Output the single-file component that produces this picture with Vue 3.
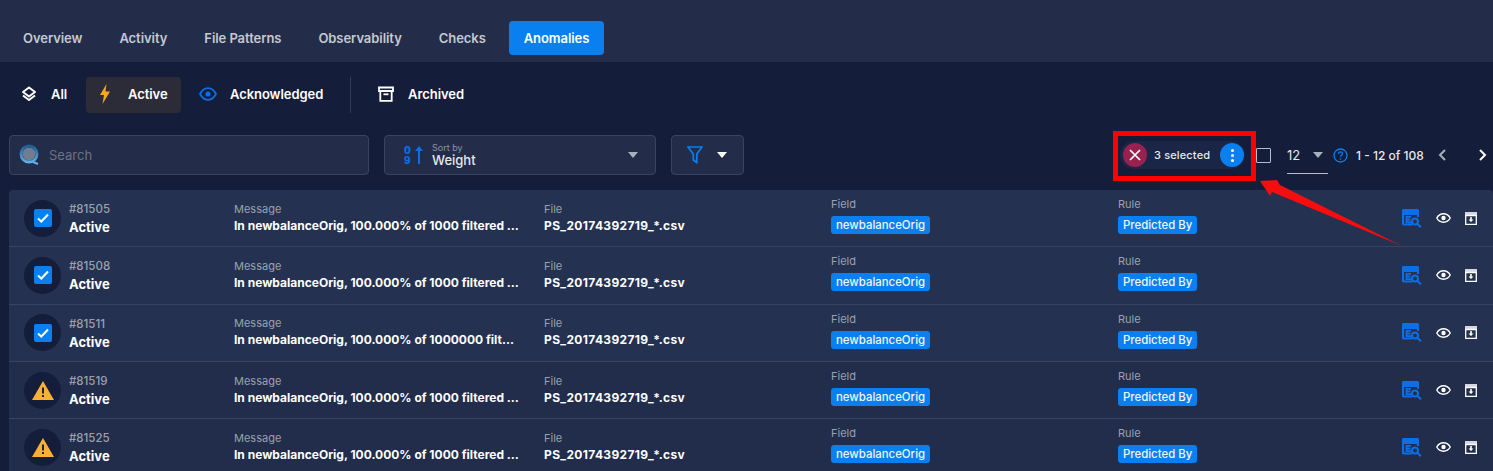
<template>
  <div class="page">
    <!-- tabs -->
    <nav class="tabs">
      <span v-for="tab in tabs" :key="tab" :class="['tab', { active: tab === 'Anomalies' }]">{{ tab }}</span>
    </nav>

    <!-- status filters -->
    <div class="status-row">
      <div class="status status-all">
        <svg width="18" height="18" viewBox="0 0 18 18" fill="none" stroke="#fff" stroke-width="2" stroke-linejoin="round"><path d="M9 2.500 15 7 9 11.500 3 7Z" /><path d="M3 10.500 9 15l6-4.500" /></svg>
        <span>All</span>
      </div>
      <div class="status status-active">
        <svg width="12" height="20" viewBox="0 0 12 20"><path d="M7.500 0 1 11h4l-1.500 9L11 7.500H6.500Z" fill="#f5a623" /></svg>
        <span>Active</span>
      </div>
      <div class="status status-ack">
        <svg width="18" height="14" viewBox="0 0 18 14" fill="none"><path d="M1 7c2-3.800 4.800-5.800 8-5.800s6 2 8 5.800c-2 3.800-4.800 5.800-8 5.800S3 10.800 1 7Z" stroke="#0a6fe8" stroke-width="1.800" /><circle cx="9" cy="7" r="2.600" fill="#0a6fe8" /></svg>
        <span>Acknowledged</span>
      </div>
      <div class="divider"></div>
      <div class="status status-arch">
        <svg width="16" height="16" viewBox="0 0 16 16" fill="none" stroke="#fff" stroke-width="1.800"><path d="M1 1.500h14v3.500H1Z" /><path d="M2.300 5v9.800h11.400V5" /><path d="M5.500 8.300h5" /></svg>
        <span>Archived</span>
      </div>
    </div>

    <!-- toolbar -->
    <div class="toolbar">
      <div class="box search">
        <svg width="22" height="24" viewBox="0 0 22 24" fill="none">
          <defs>
            <linearGradient id="ring" x1="0" y1="0" x2="0" y2="1">
              <stop offset="0" stop-color="#1c5f96" />
              <stop offset="1" stop-color="#5fb0e6" />
            </linearGradient>
          </defs>
          <circle cx="10" cy="11" r="6.500" fill="#717c90" />
          <circle cx="10" cy="11" r="8" stroke="url(#ring)" stroke-width="2.800" />
          <path d="M14 19l5 2" stroke="#5fb0e6" stroke-width="2.400" />
        </svg>
        <span>Search</span>
      </div>
      <div class="box sort">
        <div class="sort-icon">
          <div class="digits"><span>0</span><span>9</span></div>
          <svg width="8" height="18" viewBox="0 0 8 18"><path d="M4 0 8 5H5v13H3V5H0Z" fill="#0a6fe8" /></svg>
        </div>
        <div class="sort-text">
          <small>Sort by</small>
          <b>Weight</b>
        </div>
        <i class="caret grey"></i>
      </div>
      <div class="box filter">
        <svg width="16" height="18" viewBox="0 0 16 18" fill="none" stroke="#0a7ff0" stroke-width="1.700"><path d="M1 1h14L9.800 8v8.500L6.300 14V8Z" /></svg>
        <i class="caret"></i>
      </div>

      <div class="toolbar-right">
        <div class="selection">
          <span class="clear">
            <svg width="12" height="12" viewBox="0 0 12 12" stroke="#fff" stroke-width="1.700"><path d="M1 1l10 10M11 1 1 11" /></svg>
          </span>
          <span class="sel-text">3 selected</span>
          <span class="more"><em></em><em></em><em></em></span>
        </div>
        <span class="check-all"></span>
        <div class="per-page">
          <span>12</span>
          <i class="caret grey"></i>
        </div>
        <svg class="help" width="15" height="15" viewBox="0 0 15 15" fill="none"><circle cx="7.500" cy="7.500" r="6.500" stroke="#0a7ff0" stroke-width="1.300" /><path d="M5.500 5.800c0-1.200.9-2 2-2s2 .8 2 1.900c0 1.500-2 1.500-2 3" stroke="#0a7ff0" stroke-width="1.300" /><circle cx="7.500" cy="11" r=".8" fill="#0a7ff0" /></svg>
        <span class="range">1 - 12 of 108</span>
        <svg class="prev" width="9" height="12" viewBox="0 0 9 12" fill="none" stroke="#a9afbd" stroke-width="2"><path d="M7 1 2 6l5 5" /></svg>
        <svg class="next" width="9" height="12" viewBox="0 0 9 12" fill="none" stroke="#fff" stroke-width="2"><path d="M2 1l5 5-5 5" /></svg>
      </div>
    </div>

    <!-- anomaly rows -->
    <div class="list">
      <div v-for="row in rows" :key="row.id" :class="['row', { picked: row.checked }]">
        <div class="id-cell">
          <span class="badge">
            <svg v-if="row.checked" width="18" height="18" viewBox="0 0 18 18"><rect width="18" height="18" rx="2" fill="#0a7ff0" /><path d="M4 9.500l3.300 3L14 5.500" fill="none" stroke="#fff" stroke-width="2" /></svg>
            <svg v-else width="22" height="19" viewBox="0 0 22 19"><path d="M11 0 22 19H0Z" fill="#fbb034" /><path d="M10 6.500h2v6h-2ZM10 14h2v2h-2Z" fill="#1a2340" /></svg>
          </span>
          <div>
            <div class="num">#{{ row.id }}</div>
            <div class="state">Active</div>
          </div>
        </div>
        <div class="cell">
          <label>Message</label>
          <div class="val">{{ row.message }}</div>
        </div>
        <div class="cell">
          <label>File</label>
          <div class="val file">PS_20174392719_*.csv</div>
        </div>
        <div class="cell tagged">
          <label>Field</label>
          <span class="tag">newbalanceOrig</span>
        </div>
        <div class="cell tagged">
          <label>Rule</label>
          <span class="tag">Predicted By</span>
        </div>
        <div class="actions">
          <svg width="20" height="19" viewBox="0 0 20 19" fill="none">
            <path d="M10 15.500H2A1 1 0 0 1 1 14.500V2A1 1 0 0 1 2 1h13a1 1 0 0 1 1 1v6" stroke="#0a6fe8" stroke-width="2.200" />
            <path d="M1 1h15v5H1Z" fill="#0a6fe8" />
            <path d="M4.500 7.800h4.500M4.500 10.500h4M4.500 13.200h4.500M4.500 7V14" stroke="#0a6fe8" stroke-width="1.800" />
            <circle cx="13" cy="12.500" r="3" stroke="#0a6fe8" stroke-width="2" />
            <path d="M15.200 14.700 19 18.300" stroke="#0a6fe8" stroke-width="2" />
          </svg>
          <svg class="eye" width="15" height="10" viewBox="0 0 15 10" fill="none"><path d="M.8 5C2.300 2.200 4.600.8 7.500.8s5.200 1.400 6.700 4.200c-1.500 2.800-3.800 4.200-6.700 4.200S2.300 7.800.8 5Z" stroke="#fff" stroke-width="1.400" /><circle cx="7.500" cy="5" r="2.200" fill="#fff" /></svg>
          <svg class="box-icon" width="12" height="13" viewBox="0 0 12 13"><path d="M0 0h12v3H0Z" fill="#d5d7de" /><path d="M.7 3.500h10.600v9H.7Z" fill="none" stroke="#fff" stroke-width="1.300" /><path d="M5.200 5h1.600v2.500h1.700L6 10 3.500 7.500h1.700Z" fill="#fff" /></svg>
        </div>
      </div>
    </div>

    <!-- screenshot annotation -->
    <div class="mark-box"></div>
    <svg class="mark-arrow" width="150" height="70" viewBox="0 0 150 70"><path d="M0 1 17 0 20 5 142 66 12 12 10 16Z" fill="#f60d0d" /></svg>
  </div>
</template>

<script setup>
const tabs = ['Overview', 'Activity', 'File Patterns', 'Observability', 'Checks', 'Anomalies']

const shortMsg = 'In newbalanceOrig, 100.000% of 1000 filtered ...'
const rows = [
  { id: 81505, checked: true, message: shortMsg },
  { id: 81508, checked: true, message: shortMsg },
  { id: 81511, checked: true, message: 'In newbalanceOrig, 100.000% of 1000000 filt...' },
  { id: 81519, checked: false, message: shortMsg },
  { id: 81525, checked: false, message: shortMsg }
]
</script>

<style>
html, body {
  margin: 0;
  background: #141d3a;
  overflow: hidden;
}
</style>

<style scoped>
.page {
  position: relative;
  width: 1493px;
  height: 471px;
  overflow: hidden;
  background: #141d3a;
  color: #fff;
  font-family: "Inter", "Liberation Sans", sans-serif;
}

.tabs {
  display: flex;
  align-items: center;
  height: 62px;
  padding: 13px 0 0 8px;
  box-sizing: border-box;
  background: #232d4a;
}

.tab {
  display: flex;
  align-items: center;
  height: 34px;
  padding: 0 15px;
  margin-right: 7px;
  border-radius: 4px;
  font-size: 13px;
  font-weight: 600;
  letter-spacing: -0.06px;
  color: #c5c8d0;
}

.tab.active {
  margin: 0 0 0 1px;
  background: #0a7ff0;
  color: #fff;
}

.status-row {
  display: flex;
  align-items: center;
  height: 36px;
  margin-top: 15px;
  padding-left: 20px;
}

.status {
  display: flex;
  align-items: center;
  height: 36px;
  padding-bottom: 2px;
  box-sizing: border-box;
  font-size: 13px;
  font-weight: 600;
  letter-spacing: -0.06px;
}

.status-all {
  gap: 13px;
  width: 66px;
}

.status-active {
  gap: 17px;
  width: 95px;
  padding-left: 13px;
  background: #2b2c38;
  border-radius: 4px;
}

.status-ack {
  gap: 13px;
  width: 169px;
  padding-left: 18px;
}

.divider {
  width: 1px;
  height: 36px;
  background: #343d58;
}

.status-arch {
  gap: 14px;
  padding-left: 27px;
}

.toolbar {
  display: flex;
  align-items: center;
  height: 40px;
  margin-top: 22px;
  padding-left: 9px;
}

.box {
  display: flex;
  align-items: center;
  box-sizing: border-box;
  height: 40px;
  background: #232d4a;
  border: 1px solid #3a4461;
  border-radius: 4px;
}

.search {
  width: 360px;
  gap: 8px;
  padding-left: 9px;
  font-size: 13px;
  color: #6c7285;
}

.sort {
  width: 272px;
  margin-left: 15px;
  padding: 0 17px 0 19px;
}

.sort-icon {
  display: flex;
  align-items: center;
  gap: 4px;
  width: 28px;
}

.digits {
  display: flex;
  flex-direction: column;
  font-size: 10px;
  font-weight: 800;
  line-height: 10px;
  color: #0a6fe8;
}

.sort-text {
  flex: 1;
  display: flex;
  flex-direction: column;
}

.sort-text small {
  font-size: 9px;
  line-height: 10px;
  color: #8d93a4;
}

.sort-text b {
  font-size: 13px;
  font-weight: 500;
  line-height: 15px;
  color: #e6e8ed;
}

.caret {
  display: block;
  width: 0;
  height: 0;
  border-left: 5px solid transparent;
  border-right: 5px solid transparent;
  border-top: 6px solid #fff;
}

.caret.grey {
  border-top-color: #a9afbd;
}

.filter {
  width: 73px;
  margin-left: 15px;
  padding-left: 15px;
  gap: 14px;
}

.toolbar-right {
  display: flex;
  align-items: center;
  margin-left: 376px;
}

.selection {
  display: flex;
  align-items: center;
  width: 125px;
  height: 28px;
  padding: 0 1px 0 3px;
  box-sizing: border-box;
  border-radius: 14px;
  background: #1b2647;
}

.clear {
  display: flex;
  align-items: center;
  justify-content: center;
  width: 24px;
  height: 24px;
  border-radius: 50%;
  background: #97214f;
}

.sel-text {
  flex: 1;
  padding-left: 7px;
  font-size: 11px;
  font-weight: 500;
  letter-spacing: 0.15px;
  color: #e6e8ed;
}

.more {
  display: flex;
  flex-direction: column;
  align-items: center;
  justify-content: center;
  gap: 2px;
  width: 24px;
  height: 24px;
  border-radius: 50%;
  background: #0a7ff0;
}

.more em {
  width: 3px;
  height: 3px;
  border-radius: 50%;
  background: #fff;
}

.check-all {
  width: 13px;
  height: 13px;
  margin-left: 11px;
  border: 1px solid #b9bcc6;
  border-radius: 1px;
}

.per-page {
  display: flex;
  align-items: center;
  gap: 13px;
  box-sizing: border-box;
  width: 41px;
  height: 38px;
  margin: 0 5px 0 16px;
  border-bottom: 1px solid #b9bcc6;
  font-size: 13px;
  color: #e6e8ed;
}

.range {
  margin-left: 8px;
  font-size: 12px;
  font-weight: 500;
  color: #e6e8ed;
}

.prev {
  margin-left: 14px;
}

.next {
  margin-left: 31px;
}

.list {
  margin: 15px 0 0 9px;
  border-radius: 4px 4px 0 0;
  overflow: hidden;
}

.row {
  display: grid;
  grid-template-columns: 225px 310px 287px 287px 1fr 91px;
  align-items: center;
  box-sizing: border-box;
  height: 57.3px;
  border-bottom: 1px solid #3a4461;
  background: #222c4b;
}

.row.picked {
  background: #243150;
}

.id-cell {
  display: flex;
  align-items: center;
  gap: 8px;
  padding-left: 15px;
}

.badge {
  display: flex;
  align-items: center;
  justify-content: center;
  width: 37px;
  height: 37px;
  border-radius: 50%;
  background: #141d3a;
}

.num {
  font-size: 11.500px;
  font-weight: 500;
  line-height: 16px;
  color: #9ba1b0;
}

.state {
  margin-top: 2px;
  font-size: 13px;
  font-weight: 700;
  line-height: 16px;
}

.cell {
  display: flex;
  flex-direction: column;
  align-items: flex-start;
}

.cell.tagged {
  padding-bottom: 4px;
}

.cell label {
  font-size: 11px;
  line-height: 13px;
  color: #9ba1b0;
}

.val {
  margin-top: 2px;
  font-size: 12px;
  font-weight: 700;
  line-height: 16px;
  white-space: nowrap;
}

.val.file {
  letter-spacing: 0.35px;
}

.tag {
  margin-top: 5px;
  padding: 0 5px;
  height: 18px;
  line-height: 18px;
  border-radius: 3px;
  background: #0a7ff0;
  font-size: 11.400px;
  font-weight: 500;
  color: #f2f5fa;
}

.actions {
  display: flex;
  align-items: center;
}

.eye {
  margin-left: 14px;
}

.box-icon {
  margin-left: 14px;
}

.mark-box {
  position: absolute;
  left: 1113px;
  top: 131px;
  width: 143px;
  height: 50px;
  box-sizing: border-box;
  border: 5px solid #f00;
}

.mark-arrow {
  position: absolute;
  left: 1260px;
  top: 180px;
}
</style>
